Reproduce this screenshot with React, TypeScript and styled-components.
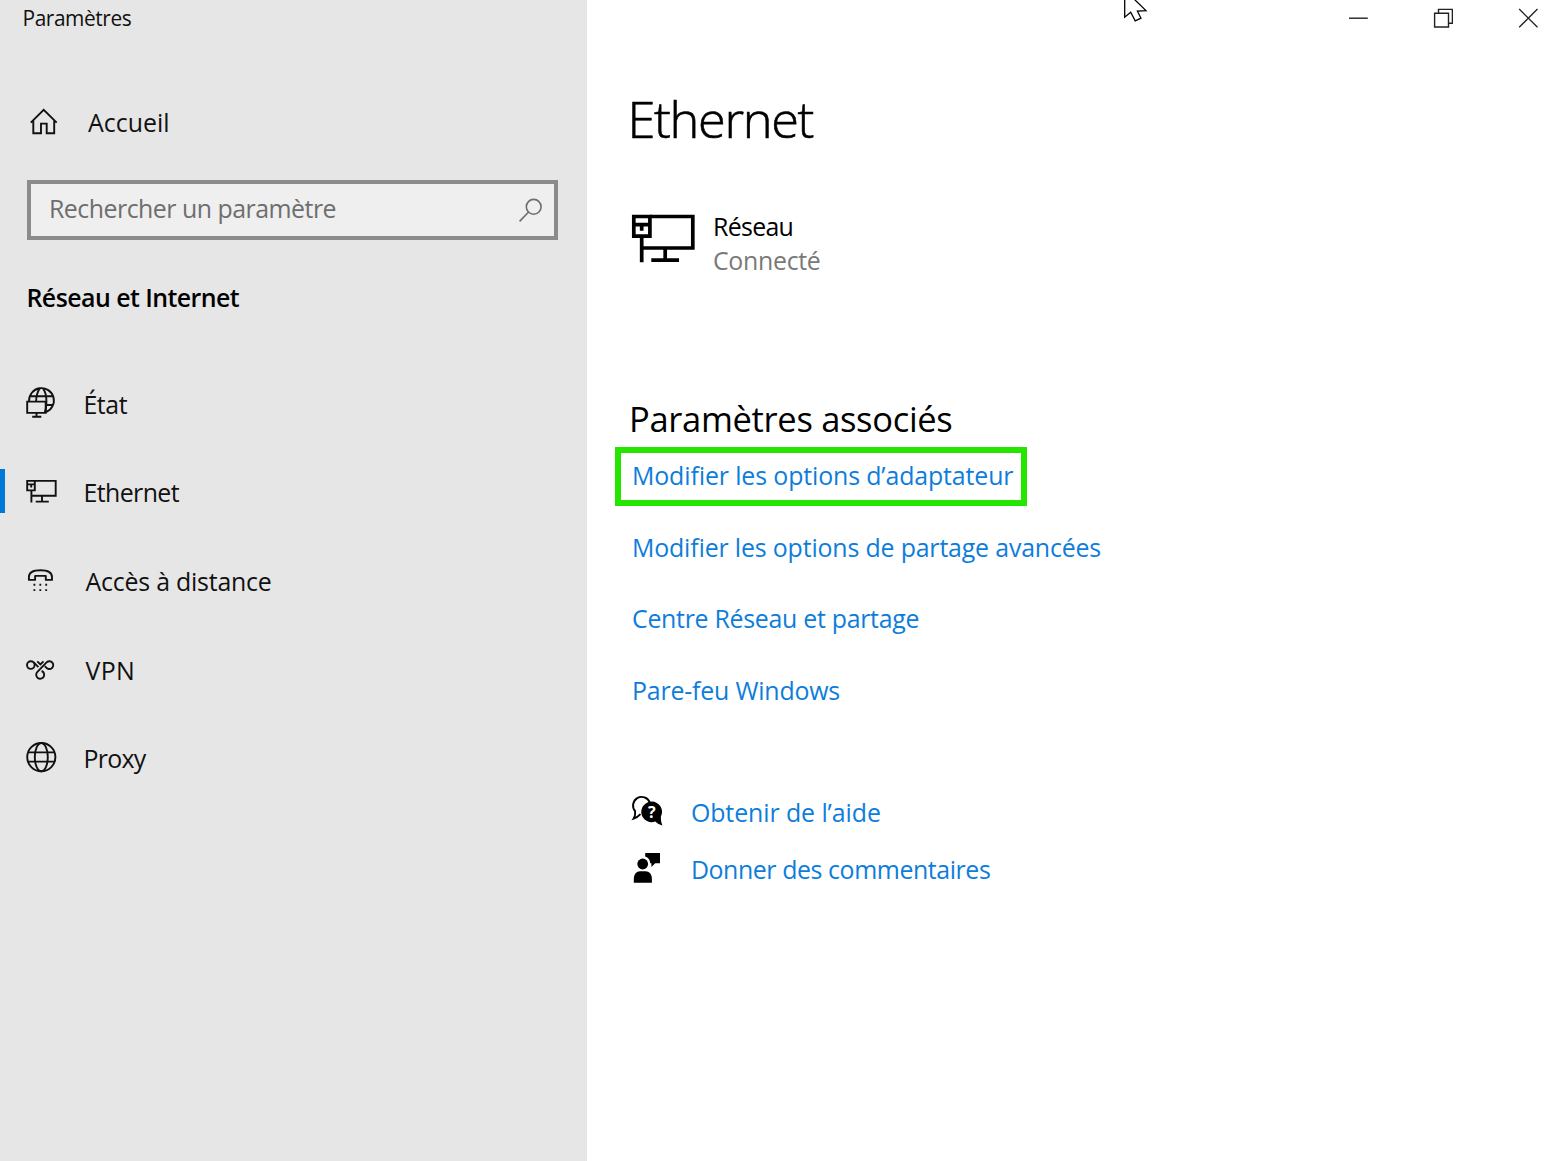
import React from "react";
import styled, { createGlobalStyle } from "styled-components";

const GlobalStyle = createGlobalStyle`
  * { box-sizing: border-box; }
  body {
    margin: 0;
    background: #fff;
    color: #000;
    font-family: "Open Sans", "Noto Sans", sans-serif;
    font-size: 24.9px;
    font-feature-settings: "liga" 1;
    overflow: hidden;
  }
`;

const Window = styled.div`
  position: relative;
  display: flex;
  width: 1564px;
  height: 1161px;
  overflow: hidden;
`;

const Label = styled.span<{ $track?: number }>`
  letter-spacing: ${(p) => p.$track ?? 0}px;
  white-space: nowrap;
`;

const Glyph = styled.svg<{ $weight?: number }>`
  display: block;
  flex: none;
  fill: none;
  stroke: currentColor;
  stroke-width: ${(p) => p.$weight ?? 1.9};
`;

/* ---------- Sidebar ---------- */

const Sidebar = styled.aside`
  display: flex;
  flex-direction: column;
  flex: 0 0 587.4px;
  background: #e6e6e6;
  color: #111;
`;

const AppTitle = styled.div`
  padding-left: 22.5px;
  font-size: 20.9px;
  line-height: 37px;
`;

const HomeLink = styled.a`
  display: flex;
  align-items: center;
  gap: 28px;
  margin-top: 55px;
  padding-left: 28px;
  height: 60px;
  line-height: 60px;
`;

const SearchBox = styled.div`
  display: flex;
  align-items: center;
  justify-content: space-between;
  width: 531.5px;
  height: 60px;
  margin: 28px 0 0 26.5px;
  padding: 0 10px 0 18.5px;
  border: 4px solid #8b8b8b;
  background: #efefef;
  color: #6e6e6e;
`;

const Placeholder = styled.div`
  padding-bottom: 4px;
`;

const SectionTitle = styled.h2`
  margin: 37px 0 0;
  padding-left: 26.5px;
  color: #000;
  font-size: 24.9px;
  font-weight: 600;
  line-height: 40px;
`;

const Nav = styled.nav`
  display: flex;
  flex-direction: column;
  margin-top: 42px;
`;

const NavItem = styled.a<{ $inset: number }>`
  display: grid;
  grid-template-columns: 25px 34px auto;
  align-items: center;
  height: 88.65px;
  line-height: 40px;

  ${Label} {
    padding-top: 1px;
    padding-left: ${(p) => p.$inset}px;
  }
`;

const Marker = styled.span<{ $on: boolean }>`
  width: 4.5px;
  height: 44px;
  margin-bottom: 2px;
  background: ${(p) => (p.$on ? "#0078d7" : "transparent")};
`;

/* ---------- Main panel ---------- */

const Main = styled.main`
  display: flex;
  flex-direction: column;
  align-items: flex-start;
  flex: 1;
  padding-left: 27.6px;
`;

const TitleBar = styled.div`
  display: flex;
  align-self: stretch;
  justify-content: flex-end;
  align-items: center;
  gap: 65px;
  height: 36px;
  padding-right: 26px;
  color: #222;
`;

const PageTitle = styled.h1`
  margin: 53px 0 0;
  padding-left: 12.5px;
  font-size: 50.5px;
  font-weight: 300;
  line-height: 60px;
  -webkit-text-stroke: 0.6px #000;
`;

const Network = styled.div`
  display: flex;
  gap: 16px;
  margin-top: 59px;
  padding-left: 16px;
`;

const NetworkIcon = styled(Glyph)`
  margin-top: 5px;
`;

const NetworkText = styled.div`
  display: flex;
  flex-direction: column;
  padding: 1px 0;
  line-height: 34px;
`;

const Status = styled(Label)`
  color: #797979;
`;

const RelatedTitle = styled.h2`
  margin: 118px 0 0;
  padding-left: 14px;
  font-size: 34.5px;
  font-weight: 400;
  line-height: 46px;
`;

const Link = styled.a`
  color: #0d7ddb;
`;

const Highlight = styled.div`
  width: 412px;
  height: 59px;
  margin-top: 5px;
  padding-left: 11px;
  border: 6px solid #26e600;
  line-height: 45px;
`;

const LinkList = styled.div`
  display: flex;
  flex-direction: column;
  margin-top: 6px;
  padding-left: 17px;
  line-height: 71.4px;
`;

const HelpList = styled.div`
  display: flex;
  flex-direction: column;
  margin-top: 57.5px;
  padding-left: 15.4px;
`;

const HelpRow = styled.div`
  display: flex;
  align-items: center;
  gap: 26.5px;
  height: 57px;
  line-height: 57px;
`;

const Pointer = styled(Glyph)`
  position: absolute;
  left: 1120px;
  top: 0;
`;

const QuestionMark = styled.text`
  fill: #fff;
  stroke: none;
  font-size: 16px;
  font-weight: 700;
`;

/* ---------- Icons ---------- */

const HomeIcon = () => (
  <Glyph width="32" height="32" viewBox="28 106 32 32">
    <path d="M30.8 122.7 43.7 109.8 56.7 122.7M33.3 120.6V133.2H41V123.6H46.7V133.2H54.2V120.6" />
  </Glyph>
);

const SearchIcon = () => (
  <Glyph $weight={1.6} width="26" height="26" viewBox="518 197 26 26">
    <circle cx="533.7" cy="206.8" r="7.4" />
    <path d="M528.4 212.2 519.6 221.4" />
  </Glyph>
);

const StatusIcon = () => (
  <Glyph width="34" height="34" viewBox="25 386.3 34 34">
    <path d="M29.1 401.5A12.4 12.4 0 1 1 45.9 412.4M30.2 396.5H53.2M46 405.3H53.2M39.8 388.8C37.4 392 36.2 396.5 36.1 401.8M43 388.8C45.4 392 46.4 396.5 46.4 401C46.4 405 46.2 409 44.8 412.6" />
    <path d="M27.2 401.9H45.7V413.2H27.2ZM36.5 413.2V417M32.2 417.1H41.3" />
  </Glyph>
);

const EthernetIcon = () => (
  <Glyph width="34" height="34" viewBox="25 475 34 34">
    <path d="M34.8 480.9H55.7V495.8H31.4M27.2 480.9H34.8V490.4H27.2ZM27.2 484.4H34.8M31.2 484.4V487.6M31.4 490.4V502.6M42 495.8V501.5M35.7 501.6H48.8" />
  </Glyph>
);

const DialUpIcon = () => (
  <Glyph width="34" height="34" viewBox="25 563.7 34 34">
    <path
      strokeLinejoin="round"
      d="M28.9 579.6V576.8C28.9 571.6 34.2 569.9 40.4 569.9S52 571.6 52 576.8V579.6H45.8V575.6H35.1V579.6Z"
    />
    <path
      strokeDasharray="1.8 4.1"
      d="M33.5 584.4H48M33.5 589.8H48"
    />
  </Glyph>
);

const VpnIcon = () => (
  <Glyph width="34" height="34" viewBox="25 652.3 34 34">
    <circle cx="30.8" cy="665.4" r="3.8" />
    <path d="M33.5 662.5 38.4 667.4M37.3 661.6 40.4 664.7 43.5 661.6" />
    <path d="M41.6 671.3A4 4 0 1 1 37.4 672.2L46.8 662.5A3.9 3.9 0 1 1 46.3 667.9L44.8 666.4" />
  </Glyph>
);

const ProxyIcon = () => (
  <Glyph width="34" height="34" viewBox="25 741 34 34">
    <circle cx="41.3" cy="757.1" r="14.1" />
    <ellipse cx="41.3" cy="757.1" rx="6.5" ry="14.1" />
    <path d="M28 752.4H54.6M28 761.6H54.6" />
  </Glyph>
);

const NetworkMonitor = () => (
  <NetworkIcon $weight={3.7} width="66" height="52" viewBox="631 213 66 52">
    <path d="M650 216.5H692.8V248H641.8M665.2 248V260M651.3 260.2H679M641.7 238V262.2" />
    <path d="M633.8 216.5H649.9V236.2H633.8ZM633.8 224.7H649.9M641.7 224.7V230.7" />
  </NetworkIcon>
);

const HelpIcon = () => (
  <Glyph width="34" height="34" viewBox="629.5 795 34 34">
    <path d="M640 814.1C638 816.2 635.8 817.7 633.2 818.5C634.6 816.4 635 814 634.6 811.2A8.7 8.7 0 1 1 649.3 802.3" />
    <path
      fill="currentColor"
      stroke="none"
      d="M651.3 801.6A10.3 10.3 0 0 1 660.4 816.6C660.2 819.6 660.8 823 662 825.6C659 824.8 656.6 823.3 654.8 821.5A10.3 10.3 0 1 1 651.3 801.6Z"
    />
    <QuestionMark x="647.6" y="817.6">?</QuestionMark>
  </Glyph>
);

const FeedbackIcon = () => (
  <Glyph width="34" height="34" viewBox="630 852 34 34">
    <g fill="currentColor" stroke="none">
      <circle cx="642.7" cy="864" r="5.4" />
      <path d="M633.8 882.8V879C633.8 874 636.5 871.2 640 871.2H645.6C649.2 871.2 651.9 874 651.9 879V882.8Z" />
      <path d="M645.2 853H660V863.2H655.2L651.4 867V863.2H650.2C650 860 648.4 857.6 645.2 856.6Z" />
    </g>
  </Glyph>
);

const Minimize = () => (
  <Glyph $weight={1.4} width="20" height="20" viewBox="1348 8 20 20">
    <path d="M1349 18.2H1367.8" />
  </Glyph>
);

const Restore = () => (
  <Glyph $weight={1.4} width="20" height="20" viewBox="1433 8 20 20">
    <path d="M1434.6 13.2H1448.5V27H1434.6ZM1438.5 13.2V9.4H1452.4V23.2H1448.5" />
  </Glyph>
);

const Close = () => (
  <Glyph $weight={1.3} width="20" height="20" viewBox="1518 8 20 20">
    <path d="M1519.2 9 1537.5 27.3M1537.5 9 1519.2 27.3" />
  </Glyph>
);

const navItems = [
  { text: "État", track: -0.38, inset: 24.4, icon: StatusIcon },
  { text: "Ethernet", track: -0.57, inset: 24.4, icon: EthernetIcon, on: true },
  { text: "Accès à distance", track: -0.22, inset: 26.6, icon: DialUpIcon },
  { text: "VPN", track: 0.3, inset: 26.6, icon: VpnIcon },
  { text: "Proxy", track: -0.68, inset: 24.4, icon: ProxyIcon },
];

const relatedLinks = [
  { text: "Modifier les options de partage avancées", track: -0.16 },
  { text: "Centre Réseau et partage", track: -0.28 },
  { text: "Pare-feu Windows", track: -0.18 },
];

export default function App() {
  return (
    <>
      <GlobalStyle />
      <Window>
        <Sidebar>
          <AppTitle>
            <Label $track={-0.43}>Paramètres</Label>
          </AppTitle>
          <HomeLink>
            <HomeIcon />
            <Label $track={0.03}>Accueil</Label>
          </HomeLink>
          <SearchBox>
            <Placeholder>
              <Label $track={-0.5}>Rechercher un paramètre</Label>
            </Placeholder>
            <SearchIcon />
          </SearchBox>
          <SectionTitle>
            <Label $track={-0.54}>Réseau et Internet</Label>
          </SectionTitle>
          <Nav>
            {navItems.map(({ text, track, inset, icon: Icon, on }) => (
              <NavItem key={text} $inset={inset}>
                <Marker $on={!!on} />
                <Icon />
                <Label $track={track}>{text}</Label>
              </NavItem>
            ))}
          </Nav>
        </Sidebar>

        <Main>
          <TitleBar>
            <Minimize />
            <Restore />
            <Close />
          </TitleBar>
          <PageTitle>
            <Label $track={-1.35}>Ethernet</Label>
          </PageTitle>
          <Network>
            <NetworkMonitor />
            <NetworkText>
              <Label $track={-0.68}>Réseau</Label>
              <Status $track={-0.3}>Connecté</Status>
            </NetworkText>
          </Network>
          <RelatedTitle>
            <Label $track={-0.32}>Paramètres associés</Label>
          </RelatedTitle>
          <Highlight>
            <Link>
              <Label $track={-0.12}>Modifier les options d’adaptateur</Label>
            </Link>
          </Highlight>
          <LinkList>
            {relatedLinks.map(({ text, track }) => (
              <Link key={text}>
                <Label $track={track}>{text}</Label>
              </Link>
            ))}
          </LinkList>
          <HelpList>
            <HelpRow>
              <HelpIcon />
              <Link>
                <Label $track={-0.07}>Obtenir de l’aide</Label>
              </Link>
            </HelpRow>
            <HelpRow>
              <FeedbackIcon />
              <Link>
                <Label $track={-0.41}>Donner des commentaires</Label>
              </Link>
            </HelpRow>
          </HelpList>
        </Main>

        <Pointer $weight={1.3} width="30" height="24" viewBox="1120 0 30 24">
          <path
            fill="#fff"
            d="M1124.7 -10V17.2L1130.7 12.2 1135.2 20.8 1141 18.2 1137.4 11.2 1146 10.6Z"
          />
        </Pointer>
      </Window>
    </>
  );
}
